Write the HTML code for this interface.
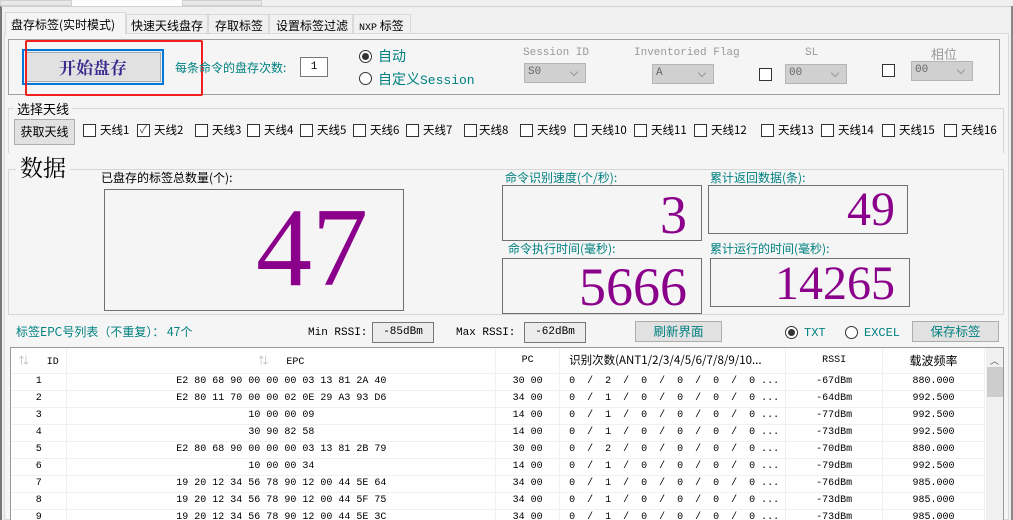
<!DOCTYPE html><html><head><meta charset="utf-8"><style>
*{margin:0;padding:0;box-sizing:border-box}
body{width:1013px;height:520px;overflow:hidden;background:#f0f0f0;font-family:"Liberation Sans","Noto Sans CJK SC",sans-serif;font-size:12px;color:#000;position:relative}
.a{position:absolute;white-space:nowrap}
.cn{font-family:"Noto Sans CJK SC",sans-serif}
.mono{font-family:"Liberation Mono","Noto Sans CJK SC",monospace}
.teal{color:#008080}
.box{position:absolute;border:1px solid #707070}
.grp{position:absolute;border:1px solid #d6d6d6}
.chk{position:absolute;width:13px;height:13px;border:1px solid #333;background:#fff}
.num{position:absolute;font-family:"Liberation Serif",serif;color:#8b008b;text-align:right}
.cb{position:absolute;background:#d0d0d0;border:1px solid #b5b5b5;color:#666;font-family:"Liberation Mono",monospace;font-size:11px;padding:2px 0 0 3px}
.cb:after{content:"";position:absolute;right:8px;top:5px;width:5px;height:5px;border-right:1px solid #999;border-bottom:1px solid #999;transform:rotate(45deg)}
.lbl{position:absolute;color:#999;font-family:"Liberation Mono",monospace;font-size:11px}
.btn{position:absolute;background:#e1e1e1;border:1px solid #adadad;text-align:center}
.radio{position:absolute;width:13px;height:13px;border:1px solid #333;border-radius:50%;background:#fff}
.radio.on:after{content:"";position:absolute;left:2px;top:2px;width:7px;height:7px;border-radius:50%;background:#333}
.ant{position:absolute;top:122px;font-family:"Noto Sans CJK SC",sans-serif;font-size:11.5px}
table{border-collapse:collapse;font-family:"Liberation Mono","Noto Sans CJK SC",monospace;font-size:10px}
td{height:17px;text-align:center;border-bottom:1px solid #f0f0f0;border-right:1px solid #f0f0f0;white-space:pre;padding:0}
td.c{text-align:left;padding-left:9px}
</style></head><body>
<div class="a" style="left:0;top:0;width:72px;height:6px;background:#e8e8e8;border:1px solid #d0d0d0"></div>
<div class="a" style="left:72px;top:0;width:110px;height:7px;background:#fff"></div>
<div class="a" style="left:182px;top:0;width:80px;height:6px;background:#e8e8e8;border:1px solid #d0d0d0"></div>
<div class="a" style="left:0;top:6px;width:1013px;height:514px;border-left:2px solid #777;border-top:1px solid #d0d0d0;background:#f0f0f0"></div>
<div class="a" style="left:1011px;top:6px;width:2px;height:514px;background:#888"></div>
<div class="a" style="left:4px;top:33px;width:1005px;height:487px;background:#f5f5f5;border:1px solid #d9d9d9"></div>
<div class="a cn" style="left:5px;top:12px;width:121px;height:22px;background:#f5f5f5;border:1px solid #d9d9d9;border-bottom:none;font-size:12px;padding:3px 0 0 5px">盘存标签(实时模式)</div>
<div class="a cn" style="left:126px;top:14px;width:82px;height:20px;background:#f0f0f0;border:1px solid #d9d9d9;font-size:12px;padding:2px 0 0 4px">快速天线盘存</div>
<div class="a cn" style="left:208px;top:14px;width:61px;height:20px;background:#f0f0f0;border:1px solid #d9d9d9;font-size:12px;padding:2px 0 0 6px">存取标签</div>
<div class="a cn" style="left:269px;top:14px;width:84px;height:20px;background:#f0f0f0;border:1px solid #d9d9d9;font-size:12px;padding:2px 0 0 6px">设置标签过滤</div>
<div class="a cn" style="left:353px;top:14px;width:58px;height:20px;background:#f0f0f0;border:1px solid #d9d9d9;font-size:12px;padding:2px 0 0 5px"><span class="mono" style="font-size:10px">NXP</span> 标签</div>
<div class="a" style="left:8px;top:39px;width:992px;height:56px;border:1px solid #a0a0a0"></div>
<div class="a" style="left:22px;top:49px;width:142px;height:36px;border:2px solid #0078d7;background:#e5f1fb"></div>
<div class="a" style="left:25px;top:52px;width:136px;height:30px;border:1px solid #aaa;background:#e1e1e1;text-align:center;font-family:'Noto Serif CJK SC',serif;font-size:17px;color:#3a2a90;font-weight:bold;line-height:28px">开始盘存</div>
<div class="a" style="left:25px;top:40px;width:178px;height:56px;border:2px solid #f02020;border-radius:2px"></div>
<div class="a cn teal" style="left:175px;top:59px;font-size:12px">每条命令的盘存次数:</div>
<div class="a" style="left:300px;top:57px;width:28px;height:20px;border:1px solid #777;background:#fff;text-align:center;font-family:'Liberation Mono';font-size:11px;line-height:18px">1</div>
<div class="radio on" style="left:359px;top:50px"></div>
<div class="a cn teal" style="left:378px;top:46px;font-size:14px">自动</div>
<div class="radio" style="left:359px;top:72px"></div>
<div class="a cn teal" style="left:378px;top:69px;font-size:14px">自定义<span class="mono" style="font-size:13px">Session</span></div>
<div class="lbl" style="left:523px;top:47px">Session ID</div>
<div class="cb" style="left:524px;top:63px;width:62px;height:20px">S0</div>
<div class="lbl" style="left:634px;top:47px">Inventoried Flag</div>
<div class="cb" style="left:652px;top:64px;width:62px;height:20px">A</div>
<div class="chk" style="left:759px;top:68px"></div>
<div class="lbl" style="left:805px;top:47px">SL</div>
<div class="cb" style="left:785px;top:64px;width:62px;height:20px">00</div>
<div class="chk" style="left:882px;top:64px"></div>
<div class="lbl cn" style="left:931px;top:44px;font-size:13px;font-family:'Noto Sans CJK SC'">相位</div>
<div class="cb" style="left:911px;top:61px;width:62px;height:20px">00</div>
<div class="grp" style="left:8px;top:108px;width:996px;height:45px;border-bottom:none"></div>
<div class="a cn" style="left:14px;top:99px;font-size:13px;background:#f5f5f5;padding:0 3px">选择天线</div>
<div class="btn cn" style="left:14px;top:119px;width:61px;height:26px;font-size:12px;line-height:24px">获取天线</div>
<div class="chk" style="left:83px;top:124px"></div><div class="ant" style="left:100px">天线1</div>
<div class="chk" style="left:137px;top:124px;font-size:11px;line-height:10px;text-align:center;color:#555">✓</div><div class="ant" style="left:154px">天线2</div>
<div class="chk" style="left:195px;top:124px"></div><div class="ant" style="left:212px">天线3</div>
<div class="chk" style="left:247px;top:124px"></div><div class="ant" style="left:264px">天线4</div>
<div class="chk" style="left:300px;top:124px"></div><div class="ant" style="left:317px">天线5</div>
<div class="chk" style="left:353px;top:124px"></div><div class="ant" style="left:370px">天线6</div>
<div class="chk" style="left:406px;top:124px"></div><div class="ant" style="left:423px">天线7</div>
<div class="chk" style="left:464px;top:124px"></div><div class="ant" style="left:479px">天线8</div>
<div class="chk" style="left:520px;top:124px"></div><div class="ant" style="left:537px">天线9</div>
<div class="chk" style="left:574px;top:124px"></div><div class="ant" style="left:591px">天线10</div>
<div class="chk" style="left:634px;top:124px"></div><div class="ant" style="left:651px">天线11</div>
<div class="chk" style="left:694px;top:124px"></div><div class="ant" style="left:711px">天线12</div>
<div class="chk" style="left:761px;top:124px"></div><div class="ant" style="left:778px">天线13</div>
<div class="chk" style="left:821px;top:124px"></div><div class="ant" style="left:838px">天线14</div>
<div class="chk" style="left:882px;top:124px"></div><div class="ant" style="left:899px">天线15</div>
<div class="chk" style="left:944px;top:124px"></div><div class="ant" style="left:961px">天线16</div>
<div class="grp" style="left:8px;top:169px;width:996px;height:146px"></div>
<div class="a" style="left:16px;top:150px;font-family:'Noto Serif CJK SC',serif;font-size:23px;background:#f5f5f5;padding:0 4px;line-height:34px">数据</div>
<div class="a cn" style="left:101px;top:169px;font-size:12px">已盘存的标签总数量(个):</div>
<div class="box" style="left:104px;top:189px;width:300px;height:122px"></div>
<div class="num" style="left:200px;top:180px;width:168px;font-size:112px;line-height:136px">47</div>
<div class="a cn teal" style="left:505px;top:169px;font-size:12px">命令识别速度(个/秒):</div>
<div class="box" style="left:502px;top:185px;width:200px;height:56px"></div>
<div class="num" style="left:600px;top:184px;width:87px;font-size:54px;line-height:62px">3</div>
<div class="a cn teal" style="left:710px;top:169px;font-size:12px">累计返回数据(条):</div>
<div class="box" style="left:708px;top:185px;width:200px;height:49px"></div>
<div class="num" style="left:800px;top:182px;width:95px;font-size:48px;line-height:56px">49</div>
<div class="a cn teal" style="left:508px;top:240px;font-size:12px">命令执行时间(毫秒):</div>
<div class="box" style="left:502px;top:258px;width:200px;height:56px"></div>
<div class="num" style="left:540px;top:256px;width:147px;font-size:54px;line-height:62px">5666</div>
<div class="a cn teal" style="left:710px;top:240px;font-size:12px">累计运行的时间(毫秒):</div>
<div class="box" style="left:710px;top:258px;width:200px;height:49px"></div>
<div class="num" style="left:740px;top:256px;width:155px;font-size:48px;line-height:56px">14265</div>
<div class="a cn teal" style="left:16px;top:323px;font-size:12px">标签EPC号列表（不重复）： 47个</div>
<div class="a mono" style="left:308px;top:327px;font-size:11px">Min RSSI:</div>
<div class="a" style="left:372px;top:322px;width:62px;height:21px;border:1px solid #777;background:#ececec;text-align:center;font-family:'Liberation Mono';font-size:11px;line-height:18px">-85dBm</div>
<div class="a mono" style="left:456px;top:327px;font-size:11px">Max RSSI:</div>
<div class="a" style="left:524px;top:322px;width:62px;height:21px;border:1px solid #777;background:#ececec;text-align:center;font-family:'Liberation Mono';font-size:11px;line-height:18px">-62dBm</div>
<div class="btn cn teal" style="left:635px;top:321px;width:87px;height:21px;font-size:12.5px;line-height:18px">刷新界面</div>
<div class="radio on" style="left:785px;top:326px"></div>
<div class="a mono teal" style="left:804px;top:326px;font-size:12px">TXT</div>
<div class="radio" style="left:845px;top:326px"></div>
<div class="a mono teal" style="left:864px;top:326px;font-size:12px">EXCEL</div>
<div class="btn cn teal" style="left:912px;top:321px;width:87px;height:21px;font-size:12.5px;line-height:18px">保存标签</div>
<div class="a" style="left:10px;top:347px;width:994px;height:173px;background:#fff;border:1px solid #999;border-bottom:none;overflow:hidden">
<table style="position:absolute;left:0;top:0;width:974px">
<colgroup><col style="width:56px"><col style="width:429px"><col style="width:64px"><col style="width:226px"><col style="width:97px"><col style="width:102px"></colgroup>
<tr style="height:25px"><td style="height:25px"><span style="color:#bbb">⇅</span>   ID</td><td><span style="color:#bbb">⇅</span>   EPC</td><td>PC</td><td class="c cn" style="font-size:11.5px">识别次数(ANT1/2/3/4/5/6/7/8/9/10...</td><td>RSSI</td><td class="cn" style="font-size:12px">载波频率</td></tr>
<tr><td>1</td><td>E2 80 68 90 00 00 00 03 13 81 2A 40</td><td>30 00</td><td class="c">0  /  2  /  0  /  0  /  0  /  0 ...</td><td>-67dBm</td><td>880.000</td></tr>
<tr><td>2</td><td>E2 80 11 70 00 00 02 0E 29 A3 93 D6</td><td>34 00</td><td class="c">0  /  1  /  0  /  0  /  0  /  0 ...</td><td>-64dBm</td><td>992.500</td></tr>
<tr><td>3</td><td>10 00 00 09</td><td>14 00</td><td class="c">0  /  1  /  0  /  0  /  0  /  0 ...</td><td>-77dBm</td><td>992.500</td></tr>
<tr><td>4</td><td>30 90 82 58</td><td>14 00</td><td class="c">0  /  1  /  0  /  0  /  0  /  0 ...</td><td>-73dBm</td><td>992.500</td></tr>
<tr><td>5</td><td>E2 80 68 90 00 00 00 03 13 81 2B 79</td><td>30 00</td><td class="c">0  /  2  /  0  /  0  /  0  /  0 ...</td><td>-70dBm</td><td>880.000</td></tr>
<tr><td>6</td><td>10 00 00 34</td><td>14 00</td><td class="c">0  /  1  /  0  /  0  /  0  /  0 ...</td><td>-79dBm</td><td>992.500</td></tr>
<tr><td>7</td><td>19 20 12 34 56 78 90 12 00 44 5E 64</td><td>34 00</td><td class="c">0  /  1  /  0  /  0  /  0  /  0 ...</td><td>-76dBm</td><td>985.000</td></tr>
<tr><td>8</td><td>19 20 12 34 56 78 90 12 00 44 5F 75</td><td>34 00</td><td class="c">0  /  1  /  0  /  0  /  0  /  0 ...</td><td>-73dBm</td><td>985.000</td></tr>
<tr><td>9</td><td>19 20 12 34 56 78 90 12 00 44 5E 3C</td><td>34 00</td><td class="c">0  /  1  /  0  /  0  /  0  /  0 ...</td><td>-73dBm</td><td>985.000</td></tr>
</table>
<div class="a" style="left:975px;top:0;width:18px;height:173px;background:#f0f0f0"></div>
<div class="a" style="left:979px;top:6px;font-size:9px;color:#555">︿</div>
<div class="a" style="left:976px;top:19px;width:16px;height:30px;background:#cdcdcd"></div>
</div>
</body></html>
